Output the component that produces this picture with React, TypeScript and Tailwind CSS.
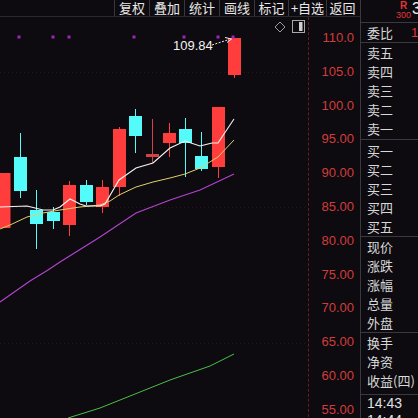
import React from "react";

const RED = "#ff3d3d";
const CYAN = "#54fbfb";

type Candle = { x: number; bt: number; bb: number; wt: number; wb: number; red: boolean; dim?: boolean };

const candles: Candle[] = [
  { x: -2.5, bt: 173, bb: 228, wt: 173, wb: 228, red: true },
  { x: 14, bt: 157, bb: 191, wt: 133, wb: 198, red: false },
  { x: 30, bt: 210, bb: 224, wt: 190, wb: 249, red: false },
  { x: 47, bt: 212, bb: 221, wt: 207, wb: 229, red: false },
  { x: 63, bt: 185, bb: 225, wt: 181, wb: 236, red: true },
  { x: 80, bt: 185, bb: 202, wt: 180, wb: 205, red: false },
  { x: 96, bt: 187, bb: 207, wt: 180, wb: 213, red: true },
  { x: 113, bt: 129, bb: 187, wt: 127, wb: 196, red: true },
  { x: 129, bt: 116, bb: 136, wt: 109, wb: 153, red: false },
  { x: 146, bt: 154, bb: 157, wt: 119, wb: 163, red: true, dim: true },
  { x: 163, bt: 133, bb: 143, wt: 123, wb: 157, red: true },
  { x: 179, bt: 129, bb: 143, wt: 118, wb: 177, red: false },
  { x: 195, bt: 156, bb: 169, wt: 132, wb: 171, red: false },
  { x: 212, bt: 107, bb: 167, wt: 107, wb: 178, red: true },
  { x: 228, bt: 38, bb: 75, wt: 38, wb: 78, red: true },
];

const ma5 = "0,207 27,206 43,210 53,210 60,207 70,199 80,204 86,206 100,206 105,204 119,180 136,168 153,163 170,148 185,141 200,146 212,143 218,143 234,119";
const ma10 = "0,229 10,225 27,217 43,213 60,210 80,207 100,205 110,201 119,195 136,187 153,182 170,178 185,174 200,168 218,157 234,140";
const ma20 = "0,302 30,281 48,270 60,262 100,237 136,213 170,200 200,190 234,174";
const ma60 = "68,418 100,408 130,396 170,380 210,366 234,354";

const dots = [19, 53, 69, 134, 184, 218, 233];

const tools = [
  { t: "复权", w: "w-[35px]" },
  { t: "叠加", w: "w-[35px]" },
  { t: "统计", w: "w-[35px]" },
  { t: "画线", w: "w-[35px]" },
  { t: "标记", w: "w-[34px]" },
  { t: "+自选", w: "w-[38px]" },
  { t: "返回", w: "w-[32px]" },
];

const prices = ["110.0", "105.0", "100.0", "95.00", "90.00", "85.00", "80.00", "75.00", "70.00", "65.00", "60.00", "55.00"];

function Row({ t, h }: { t: string; h: string }) {
  return (
    <div className={`${h} flex items-center pl-[6px] text-[13px] leading-[14px] text-[#d8d8d8] whitespace-nowrap`}>{t}</div>
  );
}

export default function App() {
  return (
    <div className="w-[418px] h-[418px] overflow-hidden bg-[#0d0b0f] flex font-['Noto_Sans_CJK_SC',sans-serif]">
      {/* left: toolbar + chart */}
      <div className="w-[360px] h-full flex flex-col shrink-0">
        <div className="h-[17px] shrink-0 border-b border-[#2a2a2c] flex pl-[114px]">
          {tools.map((b) => (
            <div
              key={b.t}
              className={`${b.w} h-full border-l border-[#38383c] flex items-center justify-center text-[13px] leading-[16px] text-[#e8e8e8] whitespace-nowrap`}
            >
              <span className="leading-[16px]">{b.t}</span>
            </div>
          ))}
        </div>
        <div className="flex-1 flex relative">
          <svg width="308" height="401" viewBox="0 17 308 401" className="shrink-0 block">
            {[72.5, 207.5, 343.5].map((y) => (
              <line key={y} x1="0" x2="308" y1={y} y2={y} stroke="#2e1416" strokeDasharray="1 3" />
            ))}
            {candles.map((c, i) => {
              const col = c.dim ? "#d24444" : c.red ? RED : CYAN;
              const cx = c.x + 6.5;
              return (
                <g key={i}>
                  <line x1={cx} x2={cx} y1={c.wt} y2={c.wb} stroke={col} strokeWidth="1" />
                  <rect x={c.x} y={c.bt} width="13" height={c.bb - c.bt} fill={col} />
                </g>
              );
            })}
            <polyline points={ma60} fill="none" stroke="#48c048" strokeWidth="1" />
            <polyline points={ma20} fill="none" stroke="#b444d0" strokeWidth="1.1" />
            <polyline points={ma10} fill="none" stroke="#e2cf6a" strokeWidth="1" />
            <polyline points={ma5} fill="none" stroke="#f4f4f4" strokeWidth="1.1" />
            {dots.map((x) => (
              <rect key={x} x={x - 1.5} y="35.5" width="3" height="3" fill="#a322c2" />
            ))}
            {/* arrow from label to high */}
            <line x1="212" y1="45" x2="229" y2="39.5" stroke="#f0f0f0" strokeWidth="1" strokeDasharray="2 1.5" />
            <path d="M225 37.5 L231.5 39 L227 42.5" fill="none" stroke="#f0f0f0" strokeWidth="1" />
            {/* diamond icon */}
            <path d="M280 22 L285 27 L280 32 L275 27 Z" fill="none" stroke="#9c9c9c" strokeWidth="1" />
            {/* box icon */}
            <rect x="292.5" y="20.5" width="12" height="12" fill="none" stroke="#a8a8a8" strokeWidth="1" />
            <rect x="299" y="22" width="3.5" height="9" fill="#d0d0d0" />
          </svg>
          <span className="absolute left-[173px] top-[21px] text-[13px] leading-[15px] text-[#f2f2f2] font-['Liberation_Sans',sans-serif]">
            109.84
          </span>
          <div className="w-[52px] h-full border-l border-dashed border-[#6a1c1e] pt-[14px] flex flex-col items-end pr-[6px]">
            {prices.map((p) => (
              <div key={p} className="h-[33.8px] shrink-0 text-[13px] leading-[14px] text-[#d23c3c] font-['Liberation_Sans',sans-serif]">
                {p}
              </div>
            ))}
          </div>
        </div>
      </div>
      {/* right panel */}
      <div className="w-[58px] h-full border-l border-[#3a3a3e] flex flex-col shrink-0 overflow-hidden">
        <div className="h-[23px] shrink-0 border-b border-[#3a3a3e] flex items-start pl-[35px]">
          <div className="w-[15px] flex flex-col items-center pt-[1px] font-['Liberation_Sans',sans-serif] text-[#e23434]">
            <span className="text-[10px] leading-[10px] font-bold">R</span>
            <span className="text-[9px] leading-[9px]">300</span>
          </div>
          <span className="ml-[1px] text-[16px] leading-[18px] text-[#eeeeee] font-['Liberation_Sans',sans-serif]">3</span>
        </div>
        <div className="h-[20px] shrink-0 border-b border-[#3a3a3e] flex items-center pl-[6px] text-[13px] leading-[14px] whitespace-nowrap">
          <span className="text-[#d8d8d8]">委比</span>
          <span className="ml-[18px] text-[#e23434] font-['Liberation_Sans',sans-serif]">1</span>
        </div>
        <div className="h-[97px] shrink-0 border-b border-[#3a3a3e] flex flex-col">
          {["卖五", "卖四", "卖三", "卖二", "卖一"].map((t) => (
            <Row key={t} t={t} h="h-[19.2px] shrink-0" />
          ))}
        </div>
        <div className="h-[97px] shrink-0 border-b border-[#3a3a3e] flex flex-col pt-[1px]">
          {["买一", "买二", "买三", "买四", "买五"].map((t) => (
            <Row key={t} t={t} h="h-[19.2px] shrink-0" />
          ))}
        </div>
        <div className="h-[96px] shrink-0 border-b border-[#3a3a3e] flex flex-col pt-[1px]">
          {["现价", "涨跌", "涨幅", "总量", "外盘"].map((t) => (
            <Row key={t} t={t} h="h-[18.8px] shrink-0" />
          ))}
        </div>
        <div className="h-[62px] shrink-0 border-b border-[#3a3a3e] flex flex-col">
          {["换手", "净资", "收益(四)"].map((t) => (
            <Row key={t} t={t} h="h-[19.2px] shrink-0" />
          ))}
        </div>
        <div className="flex flex-col">
          {["14:43", "14:44"].map((t) => (
            <div key={t} className="h-[17px] shrink-0 flex items-center pl-[6px] text-[14px] leading-[15px] text-[#e0e0e0] font-['Liberation_Sans',sans-serif]">
              {t}
            </div>
          ))}
        </div>
      </div>
    </div>
  );
}
